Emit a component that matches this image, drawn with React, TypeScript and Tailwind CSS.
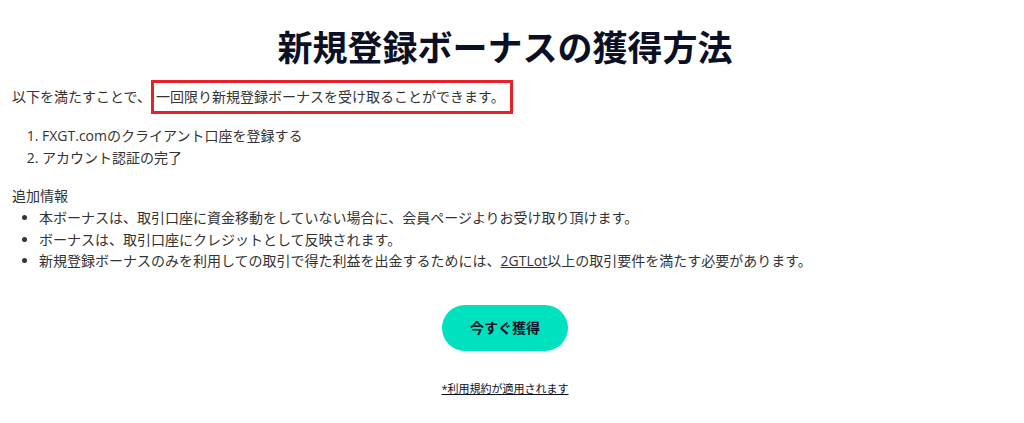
import React from "react";

export default function App() {
  const font = { fontFamily: '"Open Sans", "Noto Sans CJK JP", sans-serif' };
  return (
    <div className="w-[1010px] bg-white text-[#333333]" style={font}>
      <h1 className="pt-[24px] text-center text-[35px] font-bold leading-[48px] text-[#0b1024]">
        新規登録ボーナスの獲得方法
      </h1>
      <div className="mt-[8px] px-[12px] text-[14px]">
        <p className="leading-[34px]">
          以下を満たすことで、
          <span className="inline-block border-[3px] border-[#e8202a] pl-[2px] pr-[5px] leading-[28px]">
            一回限り新規登録ボーナスを受け取ることができます。
          </span>
        </p>
        <ol className="mt-[11px] list-decimal pl-[30px] leading-[22px]">
          <li>FXGT.comのクライアント口座を登録する</li>
          <li>アカウント認証の完了</li>
        </ol>
        <p className="mt-[16px] leading-[22px]">追加情報</p>
        <ul className="list-disc pl-[27px] leading-[21.5px]">
          <li>本ボーナスは、取引口座に資金移動をしていない場合に、会員ページよりお受け取り頂けます。</li>
          <li>ボーナスは、取引口座にクレジットとして反映されます。</li>
          <li>
            新規登録ボーナスのみを利用しての取引で得た利益を出金するためには、
            <span className="underline">2GTLot</span>
            以上の取引要件を満たす必要があります。
          </li>
        </ul>
        <div className="mt-[33px] flex justify-center">
          <button className="h-[46px] w-[126px] rounded-full bg-[#00e2bf] text-[14px] font-bold text-[#0b1024]">
            今すぐ獲得
          </button>
        </div>
        <div className="mt-[30px] flex justify-center">
          <span className="text-[11px] text-[#0b1024] underline">*利用規約が適用されます</span>
        </div>
      </div>
    </div>
  );
}
